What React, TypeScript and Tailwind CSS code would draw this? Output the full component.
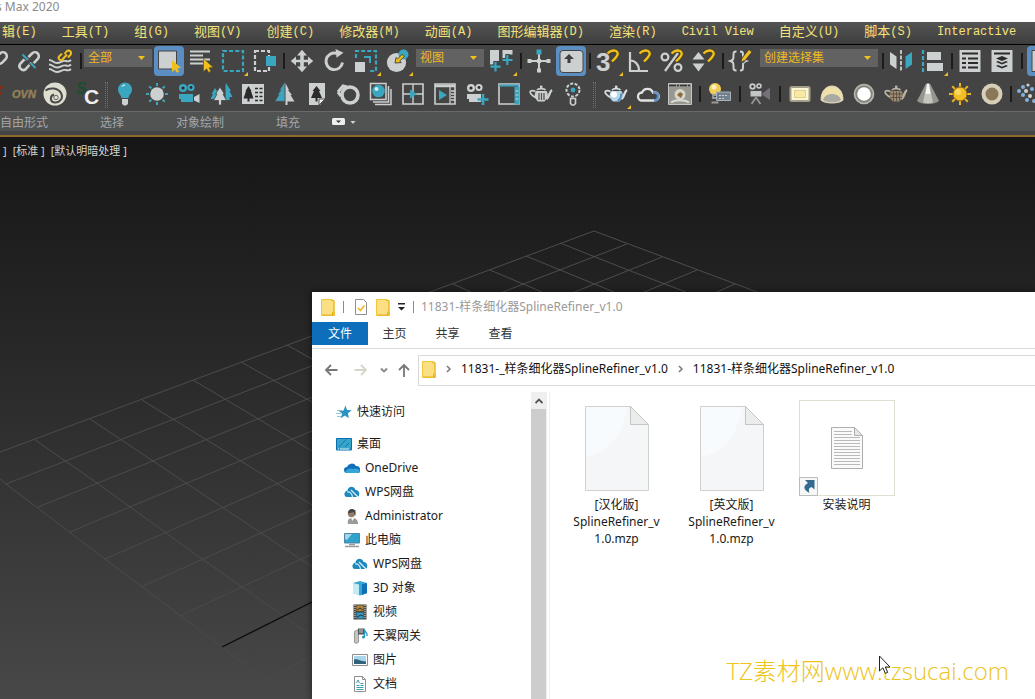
import React from 'react';

const G = '#cdd0d0';
const B = '#3aa6c0';
const Y = '#f0c11e';
const D = '#2b2b2b';

type Tool = {
  id: string;
  label: string;
  art: React.ReactNode;
  active?: boolean;
  flyout?: boolean;
};

function Art({ children }: { children: React.ReactNode }) {
  return (
    <svg className="h-6 w-6 shrink-0 overflow-visible" viewBox="0 0 24 24" fill="none" aria-hidden="true">
      {children}
    </svg>
  );
}

const chain = (
  <g stroke={G} strokeWidth="2.6" strokeLinecap="round">
    <path d="M12 7.500l3-3a3.900 3.900 0 0 1 5.800 5.300l-3.600 3.800a3.900 3.900 0 0 1-3.400 1" />
    <path d="M12 16.500l-3.200 3.600a3.900 3.900 0 0 1-5.600-5.300l3.600-3.800a3.900 3.900 0 0 1 3.400-1" />
  </g>
);
const magnet = (
  <>
    <path d="M11.500 4.500C15 1 20 .5 21.500 3.500S19 9 16 12.500" stroke="#4a3c10" strokeWidth="3.600" />
    <path d="M11.500 4.500C15 1 20 .5 21.500 3.500S19 9 16 12.500" stroke={Y} strokeWidth="2.400" />
  </>
);
const cursor = (
  <path d="M14.500 9.500v13l3.200-2.700 1.900 3.600 2.200-1.200-1.800-3.400 4-.5z" fill={Y} stroke="#5a4a10" strokeWidth=".5" />
);

const link: Tool = { id: 'link', label: '链接', art: chain };
const unlink: Tool = {
  id: 'unlink',
  label: '取消链接',
  art: (
    <>
      {chain}
      <path d="M5.500 5.500l5 5M13.500 14l5 5" stroke="#444" strokeWidth="4" />
      <path d="M5.500 5.500l5 5M13.500 14l5 5" stroke={B} strokeWidth="2" />
    </>
  ),
};
const bind: Tool = {
  id: 'bind',
  label: '绑定到空间扭曲',
  art: (
    <>
      <path
        d="M0 11c4 0 4 3 8 3s5-3 9-2c3 1 4 0 5-1M0 15.500c4 0 4 3 8 3s5-3 9-2c3 1 4 0 5-1M0 20c4 0 4 3 8 3s5-3 9-2c3 1 4 0 5-1"
        stroke={G}
        strokeWidth="1.900"
      />
      <path d="M15.500 5l2-2.500a2.500 2.500 0 0 1 4 3.200L19 8.500M18 5.500l-4.500 5a2.300 2.300 0 0 1-3.200-3.300L13 4.600" stroke={Y} strokeWidth="2" />
    </>
  ),
};
const row1a: Tool[] = [
  {
    id: 'sel',
    label: '选择对象',
    active: true,
    art: (
      <>
        <path d="M1.500 2h18v18h-18z" fill={G} stroke="#444" />
        <path d="M15 11v12l3-2.500 1.800 3.300 2.200-1.200-1.700-3.200 3.700-.6z" fill={Y} />
      </>
    ),
  },
  {
    id: 'byname',
    label: '按名称选择',
    art: (
      <>
        <path d="M1 2.500h20M1 6.500h13M1 10.500h20M1 14.500h13" stroke={G} strokeWidth="2.200" />
        {cursor}
      </>
    ),
  },
  {
    id: 'region',
    label: '矩形选择区域',
    flyout: true,
    art: <path d="M2 2h20v20H2z" stroke={B} strokeWidth="2.200" strokeDasharray="4 2.150" />,
  },
  {
    id: 'window',
    label: '窗口/交叉',
    art: (
      <>
        <path d="M2 2h14v20H2z" stroke={G} strokeWidth="2.200" strokeDasharray="4 2" />
        <path d="M13 7h10v10H13z" fill={B} />
      </>
    ),
  },
];
const row1b: Tool[] = [
  {
    id: 'move',
    label: '选择并移动',
    art: (
      <path
        d="M12 .8l5 5.700h-3.200v4.200H18V7.500l5.200 4.500-5.200 4.500v-3.200h-4.200v4.200H17l-5 5.700-5-5.700h3.200v-4.200H6v3.200L.8 12 6 7.500v3.200h4.200V6.500H7z"
        fill={G}
      />
    ),
  },
  {
    id: 'rotate',
    label: '选择并旋转',
    art: (
      <>
        <path d="M20.500 13.500a8.300 8.300 0 1 1-6-9.200" stroke={G} strokeWidth="2.900" />
        <path d="M13.500 0l8 3.800-7 5z" fill={G} />
      </>
    ),
  },
  {
    id: 'scale',
    label: '选择并缩放',
    flyout: true,
    art: (
      <>
        <path d="M2 9V2h20v20h-8" stroke={B} strokeWidth="2.200" strokeDasharray="4 2.100" />
        <path d="M10 8h6v6" stroke={B} strokeWidth="2" />
        <path d="M1 13h10v10H1z" fill={G} />
      </>
    ),
  },
  {
    id: 'place',
    label: '选择并放置',
    flyout: true,
    art: (
      <>
        <circle cx="10.500" cy="13.500" r="9.600" fill={G} />
        <circle cx="17.500" cy="5.500" r="5" fill={B} />
        <path d="M9 14l1-5.500 1.600 1.500 4.500-4.700 2.200 2.200-4.600 4.500 1.600 1.600z" fill={Y} stroke={D} strokeWidth=".8" />
      </>
    ),
  },
];
const pivot: Tool = {
  id: 'pivot',
  label: '使用轴点中心',
  flyout: true,
  art: (
    <>
      <path d="M0 1h9v11H3.500v3.500H0zM12.500 1h10v4.500h-3V5h-4v4.500h-3z" fill={G} />
      <path d="M5.500 12.500v10.500M.500 17.700h10M17.300 5.500v11M12.500 11h10" stroke="#444" strokeWidth="4" />
      <path d="M5.500 13v9.500M.500 17.700h10M17.300 6v10M12.500 11h10" stroke={B} strokeWidth="2.200" />
    </>
  ),
};
const row1c: Tool[] = [
  {
    id: 'manip',
    label: '选择并操纵',
    art: (
      <>
        <path d="M12 4v16M3 12h18" stroke={G} strokeWidth="2" />
        <path d="M10 10h4v4h-4zM.500 10h4v4h-4zM19.500 10h4v4h-4zM10 19.500h4v4h-4z" fill={G} />
        <path d="M9.500.5h5v5h-5z" fill={B} />
      </>
    ),
  },
  {
    id: 'keyb',
    label: '键盘快捷键覆盖',
    active: true,
    art: (
      <>
        <rect x="1" y="1.500" width="23" height="22" rx="3" fill={G} stroke="#444" />
        <path d="M10 5l5 5h-3.500v4h-3v-4H5z" fill="#3f3f3f" />
      </>
    ),
  },
];
const glyph = 'font-bold [font-family:"Liberation_Sans",sans-serif]';
const row1d: Tool[] = [
  {
    id: 'snap3',
    label: '捕捉开关',
    flyout: true,
    art: (
      <>
        <text x="0" y="22" fontSize="26" fill={G} className={glyph}>3</text>
        {magnet}
      </>
    ),
  },
  {
    id: 'angle',
    label: '角度捕捉切换',
    art: (
      <>
        <path d="M2 3v19h18M2 11.500c5 0 9 4 9 10" stroke={G} strokeWidth="2.200" />
        {magnet}
      </>
    ),
  },
  {
    id: 'pct',
    label: '百分比捕捉切换',
    art: (
      <>
        <circle cx="5" cy="8" r="3.400" stroke={G} strokeWidth="2.200" />
        <circle cx="18" cy="18.500" r="3.400" stroke={G} strokeWidth="2.200" />
        <path d="M18 4L5 22" stroke={G} strokeWidth="2.200" />
        {magnet}
      </>
    ),
  },
  {
    id: 'spin',
    label: '微调器捕捉切换',
    art: (
      <>
        <path d="M6.500 3l6 7.500H.5zM.500 14.500h12l-6 8z" fill={G} />
        {magnet}
      </>
    ),
  },
];
const editSet: Tool = {
  id: 'editset',
  label: '编辑命名选择集',
  art: (
    <>
      <path d="M7.500 2.500c-3 0-3 1-3 4s0 4.500-3 5.500c3 1 3 2.500 3 5.500s0 4 3 4M11 21.500c3 0 3-1 3-4s0-4.500 3-5.500c-3-1-3-2.500-3-5.500s0-4-3-4" stroke={G} strokeWidth="2" />
      <path d="M12.500 12.500L21 2.500" stroke="#444" strokeWidth="5" />
      <path d="M12.500 12.500l1-3.500L20 1l2.500 2-6.500 8z" fill={Y} />
    </>
  ),
};
const row1e: Tool[] = [
  {
    id: 'mirror',
    label: '镜像',
    art: (
      <>
        <path d="M1 3l6.500 4.500V20L1 15.500z" fill={G} />
        <path d="M23 3l-6.500 4.500V20l6.500-4.500z" fill={B} />
        <path d="M12 1v22" stroke={G} strokeWidth="1.800" strokeDasharray="4 1.500" />
      </>
    ),
  },
  {
    id: 'align',
    label: '对齐',
    flyout: true,
    art: (
      <>
        <path d="M2 1v22" stroke={B} strokeWidth="2.200" strokeDasharray="4 2" />
        <path d="M6 3h14v8H6zM6 14h16v8H6z" fill={G} />
      </>
    ),
  },
];
const row1f: Tool[] = [
  {
    id: 'layers',
    label: '切换层资源管理器',
    art: (
      <>
        <path d="M1.500 1h21v22h-21z" fill={G} />
        <path d="M4 4.500h16M4 9.500h4M10 9.500h10M4 14h4M10 14h10M4 18.500h4M10 18.500h10" stroke={D} strokeWidth="2" />
      </>
    ),
  },
  {
    id: 'stack',
    label: '切换场景资源管理器',
    art: (
      <>
        <path d="M1.500 1h21v22h-21z" fill={G} />
        <path d="M4 4.500h16" stroke={D} strokeWidth="2" />
        <path d="M12 7l6 2.500-6 2.500-6-2.500zM6 13l2-1 4 1.800 4-1.800 2 1-6 2.600zM6 17l2-1 4 1.800 4-1.800 2 1-6 2.600z" fill={D} />
      </>
    ),
  },
];
const ribbonToggle: Tool = {
  id: 'ribbon',
  label: '显示功能区',
  active: true,
  art: <path d="M2 1.500h20v21H2z" fill={G} stroke="#444" />,
};

const row2a: Tool[] = [
  { id: 'plug', label: '插件', art: <path d="M12 3l10 2-5 5 4 1-9 9z" fill="#e8d6a8" stroke="#842f17" strokeWidth="2" /> },
  {
    id: 'ovn',
    label: 'OVN',
    art: (
      <text x="0" y="16" fontSize="11" fill="#94805a" stroke="#94805a" strokeWidth=".4" className="font-bold italic [font-family:'Liberation_Sans_Narrow','Liberation_Sans',sans-serif]">
        OVN
      </text>
    ),
  },
  {
    id: 'swirl',
    label: '渲染器',
    art: (
      <>
        <circle cx="11" cy="12" r="11.500" fill="#deded0" />
        <path d="M1.500 8.500C6 5 14 6 17 11c3 6-2 10-6.500 9.500S5.500 14 10 12.500" stroke="#4a4a48" strokeWidth="2" />
        <circle cx="12" cy="15.500" r="2.200" fill="#deded0" stroke="#4a4a48" strokeWidth=".8" />
      </>
    ),
  },
  {
    id: 'sc',
    label: 'SC',
    art: (
      <>
        <text x="0" y="12" fontSize="16" fill="#1d4d2c" className={`${glyph} italic`}>S</text>
        <text x="8" y="22" fontSize="21" fill="#efefef" className={glyph}>C</text>
      </>
    ),
  },
];
const frame = <path d="M2 2h20v20H2z" stroke={G} strokeWidth="1.600" />;
const camera = (fill: string) => (
  <>
    <circle cx="6" cy="6" r="4" fill={fill} />
    <circle cx="14" cy="5.500" r="3.600" fill={fill} />
    <circle cx="6" cy="6" r="1.600" fill={D} />
    <circle cx="14" cy="5.500" r="1.400" fill={D} />
    <path d="M2 12h14v8H4v-3H2z" fill={fill} />
  </>
);
const teapot = (fill: string, stroke: string) => (
  <g>
    <path d="M6.500 9.500C2 7.500 0 9.500 2 12s4 3 6 4" stroke={stroke} strokeWidth="1.800" />
    <path d="M17.500 17c3-2 2.500-7 5.500-9" stroke={stroke} strokeWidth="2.400" />
    <path d="M7 9h10.500c2.500 4 1 7.500-2 10.500H9C6 17 4.500 13 7 9z" fill={fill} />
    <path d="M8 8c1.500-1.800 7-1.800 8.500 0" stroke={stroke} strokeWidth="1.800" />
    <circle cx="12.200" cy="5" r="1.400" fill={stroke} />
  </g>
);
const row2b: Tool[] = [
  {
    id: 'light',
    label: '灯光',
    art: (
      <>
        <path d="M12 .5a7 7 0 0 1 7 7c0 4-3 5-3.500 8.500h-7C8 12.500 5 11.500 5 7.500a7 7 0 0 1 7-7z" fill={B} />
        <path d="M9 17h6v5l-2 1.500h-2L9 22z" fill={G} />
        <path d="M9 4.500c1-1 2-1.500 3-1.500" stroke="#b8e4ee" strokeWidth="1.500" />
      </>
    ),
  },
  {
    id: 'sun',
    label: '太阳光',
    art: (
      <>
        <path d="M12 1v3M12 20v3M1 12h3M20 12h3M4.200 4.200l2.200 2.200M17.600 17.600l2.200 2.200M19.800 4.200l-2.200 2.200M6.400 17.600l-2.200 2.200" stroke={B} strokeWidth="2" />
        <circle cx="12" cy="12" r="6.800" fill={G} />
      </>
    ),
  },
  {
    id: 'cam',
    label: '摄影机',
    art: (
      <>
        {camera(B)}
        <path d="M17 15l5.500-3v9L17 18.500z" fill={G} />
      </>
    ),
  },
  {
    id: 'forest',
    label: '植物',
    art: (
      <>
        <path d="M17 1l5 8h-1.500l3 6h-3V18h-4V4zM6 6l4 6-3 6H5v-1H1.500L4 12H2.500z" fill={B} />
        <path d="M11 5l4.500 7H14l3.500 6.500h-5V23h-3v-4.500h-5L8 12H6.500z" fill={G} stroke="#444" strokeWidth=".8" />
      </>
    ),
  },
  {
    id: 'treecard',
    label: '植物列表',
    art: (
      <>
        <path d="M1 2h22v20H1z" fill={G} />
        <path d="M7.500 4l3 5H10l2.500 7.500h-4v3h-2v-3h-4L5 9h-.5z" fill={D} />
        <path d="M14 6.500h3M18.500 6.500h3M14 10.500h3M18.500 10.500h3M14 14.500h3M18.500 14.500h3M14 18.500h3M18.500 18.500h3" stroke={D} strokeWidth="1.400" />
      </>
    ),
  },
  {
    id: 'halftree',
    label: '植物预览',
    art: (
      <>
        <path d="M11.500 1v18H2.500l4-6.500H5L8.500 8H7z" fill={B} stroke="#5c7c86" strokeWidth="1" strokeDasharray="1 1" />
        <path d="M12.500 1l3.500 7h-1l4 5h-1.500l4 6.500h-7V23h-2z" fill={G} />
      </>
    ),
  },
  {
    id: 'treepage',
    label: '植物页',
    art: (
      <>
        <path d="M4 1h16v15l-5 7H4z" fill={G} />
        <path d="M11.500 4l4 5H14l3 7h-4.500v3.500h-2V16H6l3-7H7.500z" fill={D} />
        <path d="M14 23v-6h6z" fill="#eee" stroke="#555" />
      </>
    ),
  },
  {
    id: 'ring',
    label: '圆环',
    art: (
      <>
        <circle cx="13" cy="13" r="8" stroke={G} strokeWidth="3.600" />
        <path d="M1 10l5-6 4 1M1 10l3 4" stroke={G} strokeWidth="3" />
      </>
    ),
  },
  {
    id: 'material',
    label: '材质编辑器',
    art: (
      <>
        <path d="M6 22.500h16V7M4 20h15.500V4M1.500 1.500H17V17.500H1.500z" stroke={G} strokeWidth="1.500" fill="#555" fillOpacity=".4" />
        <circle cx="9.500" cy="9" r="6.300" fill={B} />
        <circle cx="7.500" cy="7" r="2" fill="#cdeef5" />
      </>
    ),
  },
  {
    id: 'quad',
    label: '视口',
    art: (
      <>
        {frame}
        <path d="M12 2v20M2 12h20" stroke={G} strokeWidth="1.400" />
        <path d="M9 7.500l7 4.500-7 4.500z" fill={B} />
      </>
    ),
  },
  {
    id: 'renderframe',
    label: '渲染帧窗口',
    art: (
      <>
        {frame}
        <path d="M2 4h20" stroke={G} strokeWidth="2.500" />
        <path d="M17 4v18M18 9h4M18 12h4M18 15h4M18 18h4" stroke={G} strokeWidth="1.300" />
        <path d="M6 8l8 5-8 5z" fill={B} />
      </>
    ),
  },
  {
    id: 'addcam',
    label: '添加摄影机',
    art: (
      <>
        {camera(G)}
        <path d="M18 12v11M12.500 17.500h11" stroke={B} strokeWidth="2.600" />
      </>
    ),
  },
  {
    id: 'rendersetup',
    label: '渲染设置',
    art: (
      <>
        {frame}
        <path d="M2 3.500h20" stroke={B} strokeWidth="2" />
        <path d="M17.500 5h5v17.500h-5z" fill={B} />
        <path d="M18.500 9h3M18.500 13h3M18.500 17h3" stroke={G} />
      </>
    ),
  },
  {
    id: 'pot',
    label: '渲染产品',
    art: (
      <>
        {teapot(G, G)}
        <path d="M10 11v7M12.500 11v7M15 11v7" stroke="#555" strokeWidth="1.300" />
      </>
    ),
  },
  {
    id: 'lamp',
    label: '灯光列表',
    art: (
      <>
        <circle cx="12" cy="8" r="6.500" stroke={G} strokeWidth="2" strokeDasharray="3 1.500" />
        <circle cx="12" cy="8" r="2.400" fill={B} />
        <path d="M9.500 16.500h5v5l-1.500 1.500h-2l-1.500-1.500z" stroke={G} strokeWidth="1.600" />
      </>
    ),
  },
];
const row2c: Tool[] = [
  {
    id: 'pot2',
    label: '渲染',
    flyout: true,
    art: (
      <>
        {teapot('#b9d7ea', '#d8dddf')}
        <circle cx="10" cy="12.500" r="3" fill="#fff" />
        <path d="M13.500 19c2.500-1.500 4-4 3.500-7.500" stroke="#4a92c4" strokeWidth="2" />
      </>
    ),
  },
  {
    id: 'cloud',
    label: '云渲染',
    art: (
      <>
        <path d="M6 18.500h12.500a4 4 0 0 0 .5-8c-1-.5-2 0-2 0a6 6 0 0 0-11 0 4 4 0 0 0 0 8z" stroke="#e2e2e2" strokeWidth="2.300" />
        <path d="M17 10.500c4 0 6 2 5 5s-3 3.200-4 3.200" stroke="#5b8fc4" strokeWidth="2.500" />
      </>
    ),
  },
  {
    id: 'frame2',
    label: '帧缓冲',
    art: (
      <>
        <path d="M.500 1.500h23v21H.5z" fill="#989891" stroke="#c5c5c5" />
        <path d="M1 3.500h22" stroke="#333" strokeWidth="1.500" strokeDasharray="7 1 2 1" />
        <circle cx="12" cy="12.500" r="5.500" fill="#d5d5ca" />
        <path d="M9 13l3-3 3 2-2 4z" fill="#8d6a39" />
        <path d="M3 20.500c4-3 14-3 18 0" stroke="#dcdcd6" strokeWidth="2" />
      </>
    ),
  },
];
const lightCard: Tool = {
  id: 'lightcard',
  label: '灯光设置',
  art: (
    <>
      <circle cx="7" cy="7" r="6" fill="#f1cd55" />
      <circle cx="6" cy="5" r="2.500" fill="#fff2bd" />
      <path d="M5 13h4v3H5zM3.500 20.500h7" stroke="#9c9c9c" strokeWidth="1.800" />
      <path d="M8.500 10h14v8.500h-14z" fill="#73818c" stroke="#a8b2b8" />
      <path d="M11 13.500h9M11 16.500h5" stroke={G} strokeDasharray="2 1" />
    </>
  ),
};
const tripod: Tool = {
  id: 'tripod',
  label: '物理摄影机',
  art: (
    <>
      <circle cx="4.500" cy="4.500" r="3.200" fill="#c4c4c4" />
      <circle cx="11" cy="4" r="2.800" fill="#c4c4c4" />
      <circle cx="4.500" cy="4.500" r="1.200" fill={D} />
      <circle cx="11" cy="4" r="1" fill={D} />
      <path d="M2.500 9h11v5.500h-11z" fill="#c4c4c4" />
      <path d="M14.500 11.500L22 5.500v12.500l-7.500-5z" fill="#77707a" />
      <path d="M8 15.500L3.500 22M8 15.500l4.500 6.500" stroke="#9a9a9a" strokeWidth="1.600" />
    </>
  ),
};
const row2d: Tool[] = [
  {
    id: 'plane',
    label: '平面光',
    art: (
      <>
        <rect x="2.500" y="5" width="19" height="14" rx="1" fill="#fdf6d8" stroke="#a69f88" strokeWidth="2" />
        <rect x="6.500" y="8.500" width="11" height="7" fill="#f8e9a4" stroke="#e2cf85" />
      </>
    ),
  },
  {
    id: 'dome',
    label: '穹顶光',
    art: (
      <>
        <path d="M1 18C1 9 6 4 12 4s11 5 11 14c-3 4-19 4-22 0z" fill="#efe2a8" stroke="#d8d3bf" />
        <path d="M3 18c2-8 16-8 18 0-3 3-15 3-18 0z" fill="#aaa9a2" />
      </>
    ),
  },
  {
    id: 'sphere',
    label: '球体光',
    art: (
      <>
        <circle cx="12" cy="12" r="9.500" fill="#85857f" stroke="#b9b9b1" strokeWidth="1.600" />
        <circle cx="12" cy="12" r="6.800" fill="#fff" />
      </>
    ),
  },
  {
    id: 'mesh',
    label: '网格光',
    art: (
      <>
        {teapot('#a08b70', '#b9b3a4')}
        <path d="M6 12h12.500M6.500 15.500h11.500M9.500 9.500v10M12.500 9.500v10M15.500 9.500v10" stroke="#5a5046" strokeWidth=".9" />
      </>
    ),
  },
  {
    id: 'ies',
    label: 'IES 光',
    art: (
      <>
        <path d="M10 1.500h4L23 19c-4 4-18 4-22 0z" fill="#96968f" />
        <path d="M11 1.500h2L17 20.500c-3 1-7 1-10 0z" fill="#c6c6c0" />
        <path d="M11 2h2l1.500 10h-5z" fill="#f4f4f2" />
      </>
    ),
  },
  {
    id: 'vsun',
    label: '日光',
    art: (
      <>
        <path
          d="M12 1v22M1 12h22M4.200 4.200l15.600 15.600M19.800 4.200L4.200 19.800"
          stroke="#e9b52a"
          strokeWidth="2"
        />
        <circle cx="12" cy="12" r="7" fill="#f2c026" stroke="#8a6412" />
        <circle cx="10" cy="10" r="3" fill="#f8d860" />
      </>
    ),
  },
  {
    id: 'disc',
    label: '圆盘光',
    art: (
      <>
        <circle cx="12" cy="12" r="8.500" fill="#837760" stroke="#d6ceb6" strokeWidth="4" />
        <circle cx="12" cy="12" r="5.500" fill="#8b7657" />
      </>
    ),
  },
];
const particles: Tool = {
  id: 'particles',
  label: '粒子',
  art: (
    <g fill="#7fb2dc">
      <circle cx="6" cy="5" r="2" />
      <circle cx="11" cy="3" r="1.600" fill={G} />
      <circle cx="2" cy="9" r="2" />
      <circle cx="9" cy="9" r="2" fill={G} />
      <circle cx="15" cy="7" r="2" />
      <circle cx="6" cy="13" r="2" />
      <circle cx="13" cy="14" r="2" fill={G} />
      <circle cx="10" cy="18" r="2" />
      <circle cx="17" cy="19" r="2" />
    </g>
  ),
};

function ToolButton({ tool }: { tool: Tool }) {
  return (
    <button type="button" aria-label={tool.label} className="relative flex h-8 w-8 shrink-0 items-center justify-center">
      {tool.active ? (
        <span className="flex h-[30px] w-[30px] items-center justify-center rounded-sm bg-[#5b8fc4]">
          <Art>{tool.art}</Art>
        </span>
      ) : (
        <Art>{tool.art}</Art>
      )}
      {tool.flyout && (
        <svg className="absolute right-px bottom-px h-1 w-1" viewBox="0 0 4 4" aria-hidden="true">
          <path d="M4 0v4H0z" fill={Y} />
        </svg>
      )}
    </button>
  );
}

function Tools({ items }: { items: Tool[] }) {
  return (
    <>
      {items.map((t) => (
        <ToolButton key={t.id} tool={t} />
      ))}
    </>
  );
}

function Sep({ width = 'w-[5px]' }: { width?: string }) {
  return (
    <span className={`flex h-8 shrink-0 items-center justify-center ${width}`}>
      <span className="h-4 w-0.5 bg-[#1b1b1b]" />
    </span>
  );
}
const Grip = () => <span className="mx-px mt-1 h-[26px] w-[3px] shrink-0 border-x border-dotted border-[#8a6f2a]" />;

function Combo({ label, value, space }: { label: string; value: string; space: string }) {
  return (
    <div className={`relative mt-1 shrink-0 ${space}`}>
      <select
        aria-label={label}
        className="block h-[18px] w-full appearance-none bg-[#626262] pl-1 text-xs leading-[18px] text-[#f0b81e] [font-family:'Noto_Sans','Noto_Sans_CJK_SC',sans-serif]"
      >
        <option>{value}</option>
      </select>
      <svg className="pointer-events-none absolute top-[7px] right-[7px] h-1 w-[7px]" viewBox="0 0 7 4" aria-hidden="true">
        <path d="M0 0h7L3.500 4z" fill={Y} />
      </svg>
    </div>
  );
}

const menus: [string, string][] = [
  ['辑', '(E)'],
  ['工具', '(T)'],
  ['组', '(G)'],
  ['视图', '(V)'],
  ['创建', '(C)'],
  ['修改器', '(M)'],
  ['动画', '(A)'],
  ['图形编辑器', '(D)'],
  ['渲染', '(R)'],
  ['', 'Civil View'],
  ['自定义', '(U)'],
  ['脚本', '(S)'],
  ['', 'Interactive'],
];

function ViewportGrid() {
  return (
    <svg className="absolute top-0 left-0 h-[563px] w-[1035px]" viewBox="0 137 1035 563" fill="none" aria-hidden="true">
      <defs>
        <linearGradient id="fade" gradientUnits="userSpaceOnUse" x1="0" y1="231" x2="0" y2="700">
          <stop offset="0" stopColor="#4c4c4c" />
          <stop offset="1" stopColor="#494949" />
        </linearGradient>
      </defs>
      <g stroke="url(#fade)">
        <path d="M0 452L594 231L757 292" />
        <path d="M0 479L6 484L105 559L222 647L290 700" />
        <path d="M6 484L627 244M38 507L662 257M70 532L697 270M105 559L735 284M141 587L312 510M180 616L312 554M265 681L312 656" />
        <path d="M35 440L97 483L202 559L312 636M90 419L312 567M142 400L312 505M193 380L312 451M241 362L312 402M287 345L312 359" />
        <path d="M560 243L628 270L686 292M526 256L614 292M490 270L542 292M453 284L471 292" />
      </g>
      <path d="M222 647L312 602" stroke="#0c0c0c" strokeWidth="1.300" />
    </svg>
  );
}

function Folder() {
  return (
    <svg className="h-[17px] w-3.5 shrink-0" viewBox="0 0 14 17" aria-hidden="true">
      <path d="M.500.500h9.500l3 1v11l.5.5v3.500H.5z" fill="#fbe083" stroke="#f0c63c" />
      <path d="M10 1l3 1v14h-1.500v-3H13M1 16h12" stroke="#e6b21d" fill="none" />
    </svg>
  );
}

const treeArt: Record<string, React.ReactNode> = {
  star: (
    <>
      <path d="M9.500 1.500l1.500 4.500 4.700.3-3.700 3 .8 5-4-2.800L4.500 14.500l1.700-4.800L3 7l4.500-.6z" fill="#2a93c0" />
      <path d="M1 6.500h5M0 9.500h5M1 12.500h4" stroke="#7fb9d6" strokeWidth=".8" />
    </>
  ),
  desktop: (
    <>
      <path d="M.500 2.500h15v11.500H.5z" fill="#36a5c8" stroke="#0b6cb4" />
      <path d="M3 11L10 3.500M9 11l4-4" stroke="#1276bd" />
      <path d="M2 13h12" stroke="#d6f1f9" strokeDasharray="1 1 8 0" />
    </>
  ),
  onedrive: (
    <>
      <path d="M3 13a3 3 0 0 1 0-6 5 5 0 0 1 9-1 4 4 0 0 1 3 7z" fill="#0f6fb9" />
      <path d="M1 12c2-4 6-4 8-3 3-1 6 0 7 2-1 2-2 2-3 2H3c-1 0-2-.5-2-1z" fill="#35a4d6" />
    </>
  ),
  wps: (
    <>
      <path d="M3.500 6.500C4 2 10 1 11.500 6c4.500 0 5 6.500 1.500 7H3C-.5 13-.5 7.500 3.500 6.500z" fill="#1e88bd" />
      <path d="M3 8c3-.5 5 2 5.500 5M7 6l7 7" stroke="#d8f0f8" strokeWidth="1.200" />
    </>
  ),
  user: (
    <>
      <path d="M4 16c-1-4 1-6 4-6s6 1 6 6z" fill="#9b9b95" />
      <path d="M7 10l1.500 3L10 10z" fill="#fff" />
      <circle cx="7.500" cy="5.500" r="3.700" fill="#8f7c6b" />
      <path d="M4 5.500C4 0 9 0 11.500 2.500L11.500 8l-2-4z" fill="#4a443f" />
    </>
  ),
  pc: (
    <>
      <path d="M.500 1.500h15v9.500H.5z" fill="#2fa2cb" stroke="#4d86a9" />
      <path d="M1 2h7L3 8 1 7z" fill="#a5d3e8" />
      <path d="M5 12.500h6M1 14.500h14" stroke="#9a9a9a" strokeWidth="1.300" />
    </>
  ),
  cube: (
    <>
      <path d="M1 3l7-2 7 2v10l-7 2.500L1 13z" fill="#36a5cf" />
      <path d="M1 3l6 1.500v11L1 13z" fill="#c3ecf4" />
      <path d="M10 4.500l5-1.500v10l-5 2z" fill="#0c6fb8" />
    </>
  ),
  video: (
    <>
      <path d="M1.500.5h13v15h-13z" fill="#48453f" />
      <path d="M4.500 1.500h7V7h-7z" fill="#b3873a" />
      <path d="M4.500 8.500h7v6h-7z" fill="#2f96c7" />
      <path d="M5 6l3-2 3 2M5 13l4-2 2 1" stroke="#3a362c" />
      <path d="M3 1v14M13 1v14" stroke="#eee" strokeDasharray="1 1" />
    </>
  ),
  gateway: (
    <>
      <path d="M2.500 3.500l4-2v12.500l-1.500 1.500-2.500-1z" fill="#c4c4c0" stroke="#787878" strokeWidth=".7" />
      <path d="M6 .5h6v6H6z" fill="#555" />
      <path d="M7 2h4M7 4h4" stroke="#eee" strokeWidth=".8" />
      <path d="M12.500 9V2l2.500 4v2" stroke="#2696c8" strokeWidth="1.300" fill="none" />
      <circle cx="11.500" cy="9" r="1.500" fill="#2696c8" />
    </>
  ),
  picture: (
    <>
      <path d="M.500 2.500h15v11H.5z" fill="#fff" stroke="#8e8e8e" />
      <path d="M2 4h12v8H2z" fill="#a9d6ea" />
      <path d="M2 7.500c4-1 6 2 12 2V12H2z" fill="#2e6379" />
    </>
  ),
  doc: (
    <>
      <path d="M2.500.5h8l3 3v12h-11z" fill="#fff" stroke="#8e8e8e" />
      <path d="M10.500.5v3h3" stroke="#8e8e8e" fill="none" />
      <path d="M8.500 7.500h3M4.500 9.500h3M8.500 9.500h3M4.500 11.500h7M4.500 13.500h7" stroke="#3b9cb8" />
      <path d="M4.500 7l1.500-3 1.500 3" stroke="#3b9cb8" />
    </>
  ),
};

type Node = { icon: string; label: string; level: number; key: string };
const places: Node[] = [
  { key: 'desk', icon: 'desktop', label: '桌面', level: 0 },
  { key: 'od', icon: 'onedrive', label: 'OneDrive', level: 1 },
  { key: 'wps1', icon: 'wps', label: 'WPS网盘', level: 1 },
  { key: 'adm', icon: 'user', label: 'Administrator', level: 1 },
  { key: 'pc', icon: 'pc', label: '此电脑', level: 1 },
  { key: 'wps2', icon: 'wps', label: 'WPS网盘', level: 2 },
  { key: '3d', icon: 'cube', label: '3D 对象', level: 2 },
  { key: 'vid', icon: 'video', label: '视频', level: 2 },
  { key: 'gw', icon: 'gateway', label: '天翼网关', level: 2 },
  { key: 'pic', icon: 'picture', label: '图片', level: 2 },
  { key: 'doc', icon: 'doc', label: '文档', level: 2 },
];
const indent = ['pl-6', 'pl-8', 'pl-10'];

function TreeItem({ node }: { node: Node }) {
  return (
    <li>
      <button type="button" className={`flex h-6 w-full items-center gap-[5px] whitespace-nowrap ${indent[node.level]}`}>
        <svg className="h-4 w-4 shrink-0" viewBox="0 0 16 16" fill="none" aria-hidden="true">
          {treeArt[node.icon]}
        </svg>
        {node.label}
      </button>
    </li>
  );
}

function BlankFile() {
  return (
    <svg className="h-[85px] w-16" viewBox="0 0 64 85" aria-hidden="true">
      <path d="M.500.500h45l18 18v66H.5z" fill="#f5f6f7" stroke="#cfd0d0" />
      <path d="M1 50C20 50 38 30 42 1H1z" fill="#f8fbfd" />
      <path d="M45.500.5v18h18z" fill="#ebecec" stroke="#c4c5c5" />
    </svg>
  );
}

function TextShortcut() {
  return (
    <span className="flex h-24 w-24 border border-[#e0e0d2]">
      <svg className="h-full w-full overflow-visible" viewBox="0 0 94 94" fill="none" aria-hidden="true">
        <path d="M31.500 26.500h23l8 8v33h-31z" fill="#fafafa" stroke="#aeaeae" />
        <path d="M54.500 26.500v8h8z" fill="#e6e6e6" stroke="#aeaeae" />
        <path d="M34 30.500h18M34 33.500h18M34 36.500h26M34 39.500h26M34 42.500h26M34 45.500h26M34 48.500h26M34 51.500h26M34 54.500h26M34 57.500h26M34 60.500h26M34 63.500h26" stroke="#b9b9b9" />
        <path d="M-.500 76.500h18v18h-18z" fill="#f7f7f7" stroke="#b7bcc0" />
        <path d="M5 79h9.500v9.500L11.500 86c-3 1-3 3-2 6-6-3-7-7-1.500-10z" fill="#356a8f" />
      </svg>
    </span>
  );
}

const files = [
  { name: ['[汉化版]', 'SplineRefiner_v', '1.0.mzp'], art: <BlankFile /> },
  { name: ['[英文版]', 'SplineRefiner_v', '1.0.mzp'], art: <BlankFile /> },
  { name: ['安装说明'], art: <TextShortcut /> },
];

const Chevron = () => (
  <svg className="h-2 w-[5px] shrink-0" viewBox="0 0 5 8" fill="none" aria-hidden="true">
    <path d="M1 1l3 3-3 3" stroke="#777" strokeWidth="1.500" />
  </svg>
);

function Arrow({ label, d, color, slot }: { label: string; d: string; color: string; slot: string }) {
  return (
    <button type="button" aria-label={label} className={`flex shrink-0 justify-center ${slot}`}>
      <svg className="h-3.5 w-3.5" viewBox="0 0 14 14" fill="none" aria-hidden="true">
        <path d={d} stroke={color} strokeWidth="1.800" />
      </svg>
    </button>
  );
}

function Explorer() {
  return (
    <section className="relative mt-[155px] ml-[312px] flex min-w-0 flex-1 flex-col bg-white text-xs text-[#1a1a1a] shadow-[0_0_6px_1px_rgba(0,0,0,0.45)] [font-family:'Noto_Sans','Noto_Sans_CJK_SC',sans-serif]">
      <header className="flex h-[30px] items-center pl-[9px] text-[#999]">
        <Folder />
        <span className="ml-2 h-3 w-px bg-[#8c8c8c]" />
        <svg className="ml-[10px] h-4 w-3.5" viewBox="0 0 14 16" fill="none" aria-hidden="true">
          <path d="M1.500.5h8l3 3v12h-11z" stroke="#8f8f8f" />
          <path d="M4 9l2.500 2.500 4-5" stroke="#efb928" strokeWidth="1.700" />
        </svg>
        <span className="ml-2 flex"><Folder /></span>
        <svg className="ml-2 h-2 w-[7px]" viewBox="0 0 7 8" aria-hidden="true">
          <path d="M0 0h7v1.500H0zM0 4h7L3.500 7.500z" fill="#222" />
        </svg>
        <span className="ml-2 h-3 w-px bg-[#8c8c8c]" />
        <h1 className="ml-[7px] whitespace-nowrap">11831-样条细化器SplineRefiner_v1.0</h1>
      </header>
      <div className="flex h-[27px] border-b border-[#dadbdc] text-[#333]">
        <button type="button" className="h-[23px] w-14 bg-[#0d6ebb] text-white">文件</button>
        <button type="button" className="h-6 w-[53px]">主页</button>
        <button type="button" className="h-6 w-[53px]">共享</button>
        <button type="button" className="h-6 w-[53px]">查看</button>
      </div>
      <div className="flex h-[43px] items-center pt-[5px] pb-1.5 pl-1">
        <Arrow label="后退" slot="w-[30px]" color="#777" d="M13.500 7H2M7 2L2 7l5 5" />
        <Arrow label="前进" slot="w-[30px]" color="#d5d5ca" d="M.500 7H12M7 2l5 5-5 5" />
        <Arrow label="最近位置" slot="w-4" color="#888" d="M4 5.500l3 3 3-3" />
        <Arrow label="上移" slot="w-6" color="#777" d="M7 14V2M2 7l5-5 5 5" />
        <nav aria-label="地址" className="ml-0.5 flex h-[31px] min-w-0 flex-1 items-center border-y border-l border-[#d9d9d9] pb-0.5 pl-[3px] text-[#111]">
          <Folder />
          <span className="ml-2.5 flex"><Chevron /></span>
          <button type="button" className="ml-2.5 whitespace-nowrap">11831-_样条细化器SplineRefiner_v1.0</button>
          <span className="ml-2.5 flex"><Chevron /></span>
          <button type="button" className="ml-2.5 whitespace-nowrap">11831-样条细化器SplineRefiner_v1.0</button>
        </nav>
      </div>
      <div className="flex flex-1">
        <ul className="w-[219px] shrink-0 pt-2">
          <TreeItem node={{ key: 'quick', icon: 'star', label: '快速访问', level: 0 }} />
          <li className="h-2" />
          {places.map((n) => (
            <TreeItem key={n.key} node={n} />
          ))}
        </ul>
        <div className="flex w-4 shrink-0 flex-col bg-[#efefef] pr-px">
          <button type="button" aria-label="向上滚动" className="flex h-[17px] items-center justify-center">
            <svg className="h-1.5 w-2" viewBox="0 0 8 6" fill="none" aria-hidden="true">
              <path d="M.500 5L4 1.500 7.500 5" stroke="#555" strokeWidth="1.800" />
            </svg>
          </button>
          <div className="flex-1 bg-[#cdcdce]" />
        </div>
        <div className="ml-0.5 flex min-w-0 flex-1 border-l border-[#f0f0f0] pt-2 pl-[9px]">
          {files.map((f) => (
            <button type="button" key={f.name[0]} className="flex w-[115px] flex-col items-center self-start leading-[17px]">
              <span className="flex h-24 items-center justify-center">{f.art}</span>
              {f.name.map((line) => (
                <span key={line} className="whitespace-nowrap">{line}</span>
              ))}
            </button>
          ))}
        </div>
      </div>
    </section>
  );
}

export default function App() {
  return (
    <div className="flex min-h-screen flex-col overflow-hidden bg-[#444]">
      <div className="h-[22px] bg-white text-xs leading-[14px] text-[#8b8b8b] [font-family:'Noto_Sans',sans-serif]">
        <span className="-ml-1 whitespace-nowrap">s Max 2020</span>
      </div>
      <nav className="flex h-[23px] items-center gap-[25px] overflow-hidden border-b border-black bg-linear-to-b from-[#545454] to-[#3e3e3e] pb-1 pl-0.5 text-[#f4e27a]">
        {menus.map(([cjk, latin]) => (
          <button
            type="button"
            key={cjk + latin}
            className="flex shrink-0 items-center whitespace-nowrap text-[13px] leading-4 [font-family:'Noto_Sans_CJK_SC',sans-serif]"
          >
            {cjk}
            <span className="pt-0.5 text-xs leading-4 [font-family:'Liberation_Mono',monospace]">{latin}</span>
          </button>
        ))}
      </nav>
      <div className="overflow-hidden">
        <div className="-ml-[19px] flex h-[33px] items-start">
          <Tools items={[link, unlink, bind]} />
          <Sep width="w-[7px]" />
          <Combo label="选择过滤器" value="全部" space="mr-px w-[68px]" />
          <Tools items={row1a} />
          <Sep />
          <Tools items={row1b} />
          <Combo label="参考坐标系" value="视图" space="mx-0.5 w-[68px]" />
          <ToolButton tool={pivot} />
          <Sep />
          <Tools items={row1c} />
          <Sep />
          <Tools items={row1d} />
          <Sep />
          <ToolButton tool={editSet} />
          <Combo label="命名选择集" value="创建选择集" space="mr-0.5 ml-[3px] w-[118px]" />
          <Sep />
          <Tools items={row1e} />
          <Sep />
          <Tools items={row1f} />
          <Sep width="w-2" />
          <ToolButton tool={ribbonToggle} />
        </div>
        <div className="-ml-6 flex h-[33px] items-start">
          <Tools items={row2a} />
          <Grip />
          <Tools items={row2b} />
          <span className="flex px-[3px]"><Grip /></span>
          <Tools items={row2c} />
          <Sep width="w-2" />
          <ToolButton tool={lightCard} />
          <Sep width="w-2" />
          <ToolButton tool={tripod} />
          <Sep width="w-2" />
          <Tools items={row2d} />
          <Sep />
          <ToolButton tool={particles} />
        </div>
      </div>
      <div className="flex h-5 items-center gap-[52px] border-t border-[#6a6a6a] bg-[#515352] text-xs text-[#a3a5a8] [font-family:'Noto_Sans_CJK_SC',sans-serif]">
        <button type="button">自由形式</button>
        <button type="button">选择</button>
        <button type="button">对象绘制</button>
        <span className="flex items-center gap-8">
          <button type="button">填充</button>
          <button type="button" aria-label="功能区选项">
            <svg className="h-2 w-6" viewBox="0 0 24 8" aria-hidden="true">
              <rect width="13" height="7" rx="1.500" fill="#eee" />
              <path d="M4 2.500h5L6.500 5z" fill="#333" />
              <path d="M18.500 3h5L21 6z" fill="#d0d0d0" />
            </svg>
          </button>
        </span>
      </div>
      <div className="h-1.5 border-b-2 border-[#8e6c28] bg-[#444]" />
      <main className="relative flex flex-1 overflow-hidden bg-linear-to-b from-[#161616] to-[#484848]">
        <ViewportGrid />
        <p className="absolute top-1.5 left-[3px] flex gap-1.5 text-[11px] leading-4 whitespace-nowrap text-[#d2d2d2] [font-family:'Noto_Sans','Noto_Sans_CJK_SC',sans-serif]">
          <span>]</span>
          <span>[标准 ]</span>
          <span>[默认明暗处理 ]</span>
        </p>
        <Explorer />
        <p className="absolute right-[26px] bottom-2.5 text-2xl leading-9 font-light whitespace-nowrap text-[#edc41c] [font-family:'Open_Sans','Noto_Sans_CJK_SC',sans-serif]">
          TZ素材网www.tzsucai.com
        </p>
        <svg className="absolute right-[143px] bottom-6 h-5 w-3.5" viewBox="0 0 14 20" aria-hidden="true">
          <path d="M1.500 1v15l3.400-3.200 2.400 5.600 2.400-1-2.400-5.400H12z" fill="#fff" stroke="#222" />
        </svg>
      </main>
    </div>
  );
}
